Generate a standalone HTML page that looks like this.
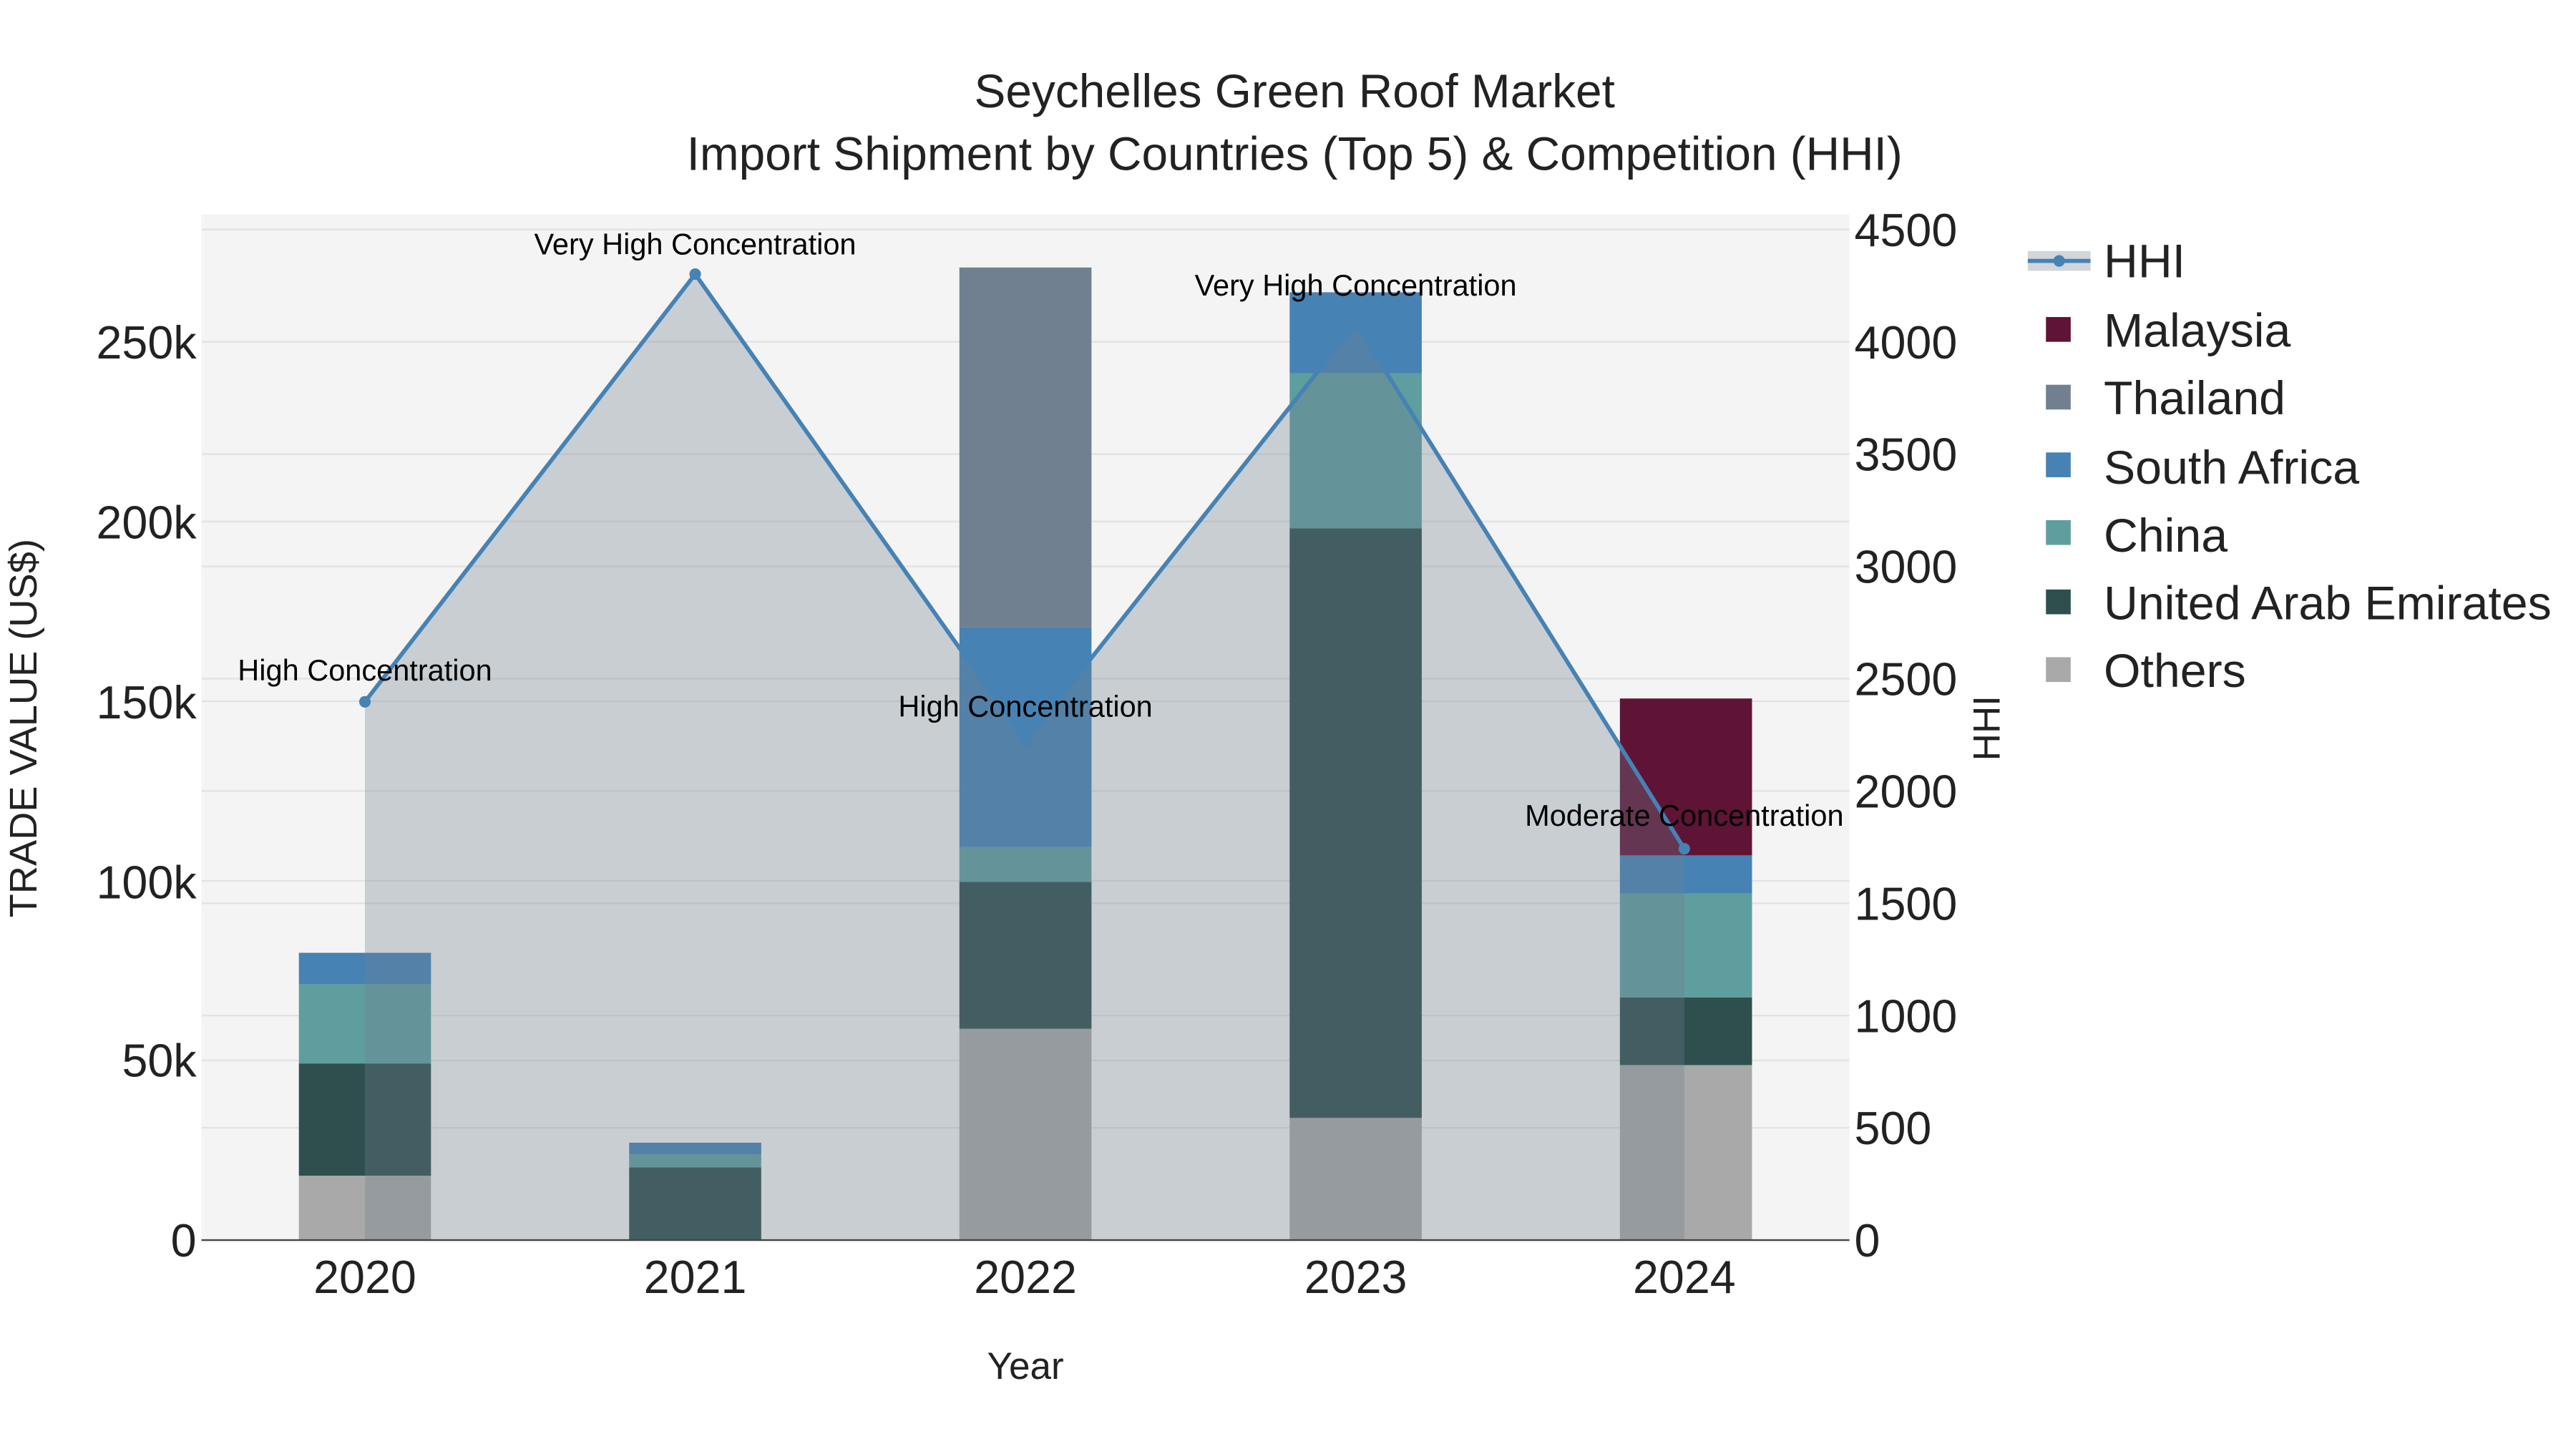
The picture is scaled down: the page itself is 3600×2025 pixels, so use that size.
<!DOCTYPE html>
<html><head><meta charset="utf-8"><style>html,body{margin:0;padding:0;background:#fff}svg{display:block}text{font-family:"Liberation Sans",sans-serif}</style></head>
<body>
<svg width="3600" height="2025" viewBox="0 0 1560 877.5" xmlns="http://www.w3.org/2000/svg">
<rect x="0" y="0" width="1560" height="877.5" fill="#fff"/>
<rect x="122" y="130" width="998" height="621" fill="#f4f4f4"/>
<g stroke="#e2e2e2" stroke-width="1">
<line x1="122" x2="1120" y1="642.2" y2="642.2"/><line x1="122" x2="1120" y1="533.4" y2="533.4"/><line x1="122" x2="1120" y1="424.6" y2="424.6"/><line x1="122" x2="1120" y1="315.8" y2="315.8"/><line x1="122" x2="1120" y1="207" y2="207"/>
<line x1="122" x2="1120" y1="683" y2="683"/><line x1="122" x2="1120" y1="615" y2="615"/><line x1="122" x2="1120" y1="547" y2="547"/><line x1="122" x2="1120" y1="479" y2="479"/><line x1="122" x2="1120" y1="411" y2="411"/><line x1="122" x2="1120" y1="343" y2="343"/><line x1="122" x2="1120" y1="275" y2="275"/><line x1="122" x2="1120" y1="139" y2="139"/>
</g>
<g>
<rect x="181" y="712" width="80" height="39" fill="#a9a9a9"/>
<rect x="181" y="644" width="80" height="68" fill="#2f4f4f"/>
<rect x="181" y="596" width="80" height="48" fill="#5f9e9e"/>
<rect x="181" y="577" width="80" height="19" fill="#4682b4"/>
<rect x="381" y="707" width="80" height="44" fill="#2f4f4f"/>
<rect x="381" y="699" width="80" height="8" fill="#5f9e9e"/>
<rect x="381" y="692" width="80" height="7" fill="#4682b4"/>
<rect x="581" y="623" width="80" height="128" fill="#a9a9a9"/>
<rect x="581" y="534" width="80" height="89" fill="#2f4f4f"/>
<rect x="581" y="513" width="80" height="21" fill="#5f9e9e"/>
<rect x="581" y="380" width="80" height="133" fill="#4682b4"/>
<rect x="581" y="162" width="80" height="218" fill="#708090"/>
<rect x="781" y="677" width="80" height="74" fill="#a9a9a9"/>
<rect x="781" y="320" width="80" height="357" fill="#2f4f4f"/>
<rect x="781" y="226" width="80" height="94" fill="#5f9e9e"/>
<rect x="781" y="177" width="80" height="49" fill="#4682b4"/>
<rect x="981" y="645" width="80" height="106" fill="#a9a9a9"/>
<rect x="981" y="604" width="80" height="41" fill="#2f4f4f"/>
<rect x="981" y="541" width="80" height="63" fill="#5f9e9e"/>
<rect x="981" y="518" width="80" height="23" fill="#4682b4"/>
<rect x="981" y="423" width="80" height="95" fill="#5f1435"/>
</g>
<polygon points="221,751 221,425 421,166 621,449 821,196 1020,514 1020,751" fill="rgba(112,128,144,0.32)"/>
<polyline points="221,425 421,166 621,449 821,196 1020,514" fill="none" stroke="#4682b4" stroke-width="2.5"/>
<g fill="#4682b4"><circle cx="221" cy="425" r="3.5"/><circle cx="421" cy="166" r="3.5"/><circle cx="621" cy="449" r="3.5"/><circle cx="821" cy="196" r="3.5"/><circle cx="1020" cy="514" r="3.5"/></g>
<line x1="122" x2="1120" y1="751" y2="751" stroke="#444" stroke-width="1"/>
<g font-size="18" fill="#000" text-anchor="middle">
<text x="221" y="412">High Concentration</text>
<text x="421" y="154">Very High Concentration</text>
<text x="621" y="434">High Concentration</text>
<text x="821" y="179">Very High Concentration</text>
<text x="1020" y="500">Moderate Concentration</text>
</g>
<g font-size="28.5" fill="#222" text-anchor="middle">
<text x="784" y="65">Seychelles Green Roof Market</text>
<text x="784" y="103">Import Shipment by Countries (Top 5) &amp; Competition (HHI)</text>
</g>
<g font-size="28" fill="#222" text-anchor="end">
<text x="119" y="761">0</text><text x="119" y="652">50k</text><text x="119" y="544">100k</text><text x="119" y="435">150k</text><text x="119" y="326">200k</text><text x="119" y="217">250k</text>
</g>
<g font-size="28" fill="#222" text-anchor="start">
<text x="1123" y="761">0</text><text x="1123" y="693">500</text><text x="1123" y="625">1000</text><text x="1123" y="557">1500</text><text x="1123" y="489">2000</text><text x="1123" y="421">2500</text><text x="1123" y="353">3000</text><text x="1123" y="285">3500</text><text x="1123" y="217">4000</text><text x="1123" y="149">4500</text>
</g>
<g font-size="28" fill="#222" text-anchor="middle">
<text x="221" y="783">2020</text><text x="421" y="783">2021</text><text x="621" y="783">2022</text><text x="821" y="783">2023</text><text x="1020" y="783">2024</text>
</g>
<text x="621" y="835" font-size="23" fill="#222" text-anchor="middle">Year</text>
<text transform="translate(22,441) rotate(-90)" font-size="23.5" fill="#222" text-anchor="middle">TRADE VALUE (US$)</text>
<text transform="translate(1211,441) rotate(-90)" font-size="23" fill="#222" text-anchor="middle">HHI</text>
<rect x="1228" y="152" width="38" height="12" fill="rgba(112,128,144,0.32)"/>
<line x1="1228" x2="1266" y1="158" y2="158" stroke="#4682b4" stroke-width="2.5"/>
<circle cx="1247" cy="158" r="3.5" fill="#4682b4"/>
<g font-size="28.7" fill="#222">
<text x="1274" y="168">HHI</text>
<rect x="1239" y="192" width="15" height="15" fill="#5f1435"/><text x="1274" y="210">Malaysia</text>
<rect x="1239" y="233" width="15" height="15" fill="#708090"/><text x="1274" y="251">Thailand</text>
<rect x="1239" y="274" width="15" height="15" fill="#4682b4"/><text x="1274" y="293">South Africa</text>
<rect x="1239" y="315" width="15" height="15" fill="#5f9e9e"/><text x="1274" y="334">China</text>
<rect x="1239" y="357" width="15" height="15" fill="#2f4f4f"/><text x="1274" y="375">United Arab Emirates</text>
<rect x="1239" y="398" width="15" height="15" fill="#a9a9a9"/><text x="1274" y="416">Others</text>
</g>
</svg>
</body></html>
